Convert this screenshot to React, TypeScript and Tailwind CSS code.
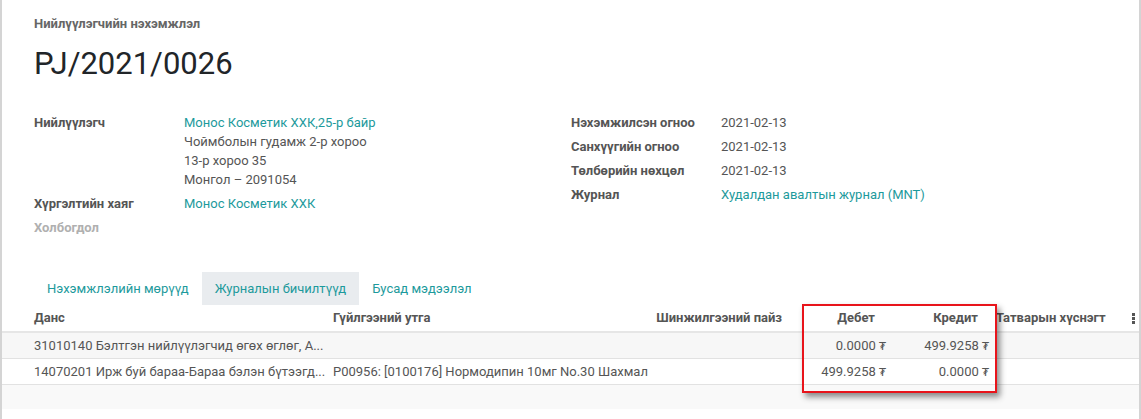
import React from "react";

const link = "text-[#1d9a9c]";

function Field({ label, children, muted }: { label: string; children?: React.ReactNode; muted?: boolean }) {
  return (
    <div className="flex mb-[5px] leading-[19px]">
      <div className={`w-[150px] shrink-0 font-bold ${muted ? "text-[#b0b0b0]" : "text-[#555]"}`}>{label}</div>
      <div className="text-[#555]">{children}</div>
    </div>
  );
}

function Kebab() {
  return (
    <div className="flex flex-col gap-[1px] items-center">
      <span className="w-[3px] h-[3px] bg-[#555]" />
      <span className="w-[3px] h-[3px] bg-[#555]" />
      <span className="w-[3px] h-[3px] bg-[#555]" />
    </div>
  );
}

const rows = [
  { account: "31010140 Бэлтгэн нийлүүлэгчид өгөх өглөг, А...", label: "", debit: "0.0000", credit: "499.9258", bg: "bg-[#f7f7f7]" },
  { account: "14070201 Ирж буй бараа-Бараа бэлэн бүтээгд...", label: "P00956: [0100176] Нормодипин 10мг No.30 Шахмал", debit: "499.9258", credit: "0.0000", bg: "bg-white" },
];

const cols = "grid grid-cols-[326px_324px_140px_104px_100px_136px_8px]";

export default function App() {
  return (
    <div className="relative w-[1141px] h-[419px] overflow-hidden bg-white border-l-2 border-r-2 border-[#d4d4d4] text-[13px] font-['Roboto',sans-serif] text-[#555]">
      <div className="pl-[32px] pt-[15px]">
        <div className="font-bold text-[#666] leading-[18px]">Нийлүүлэгчийн нэхэмжлэл</div>
        <h1 className="mt-[13px] text-[31px] leading-[36px] text-[#212529]">PJ/2021/0026</h1>

        <div className="flex mt-[31px]">
          <div className="w-[537px]">
            <Field label="Нийлүүлэгч">
              <div className={link}>Монос Косметик ХХК,25-р байр</div>
              <div>Чоймболын гудамж 2-р хороо</div>
              <div>13-р хороо 35</div>
              <div>Монгол – 2091054</div>
            </Field>
            <Field label="Хүргэлтийн хаяг">
              <span className={link}>Монос Косметик ХХК</span>
            </Field>
            <Field label="Холбогдол" muted />
          </div>
          <div>
            <Field label="Нэхэмжилсэн огноо">2021-02-13</Field>
            <Field label="Санхүүгийн огноо">2021-02-13</Field>
            <Field label="Төлбөрийн нөхцөл">2021-02-13</Field>
            <Field label="Журнал">
              <span className={link}>Худалдан авалтын журнал (MNT)</span>
            </Field>
          </div>
        </div>

        <div className="flex mt-[30px] h-[33px] items-stretch">
          <div className={`px-[13px] flex items-center ${link}`}>Нэхэмжлэлийн мөрүүд</div>
          <div className={`px-[13px] flex items-center bg-[#e9ecef] ${link}`}>Журналын бичилтүүд</div>
          <div className={`px-[13px] flex items-center ${link}`}>Бусад мэдээлэл</div>
        </div>
      </div>

      <div>
        <div className={`${cols} h-[28px] items-center font-bold text-[#555] border-b-2 border-[#e6e6e6]`}>
          <div className="pl-[32px]">Данс</div>
          <div className="pl-[5px]">Гүйлгээний утга</div>
          <div className="text-right pr-[10px]">Шинжилгээний пайз</div>
          <div className="text-right pr-[21px]">Дебет</div>
          <div className="text-right pr-[18px]">Кредит</div>
          <div className="whitespace-nowrap">Татварын хүснэгт</div>
          <div className="flex justify-start"><Kebab /></div>
        </div>
        {rows.map((r) => (
          <div key={r.account} className={`${cols} h-[26px] items-center border-b border-[#e2e2e2] ${r.bg}`}>
            <div className="pl-[32px] truncate">{r.account}</div>
            <div className="pl-[5px] whitespace-nowrap">{r.label}</div>
            <div />
            <div className="text-right pr-[10px]">{r.debit} <span className="font-['DejaVu_Sans',sans-serif] text-[11px]">₮</span></div>
            <div className="text-right pr-[7px]">{r.credit} <span className="font-['DejaVu_Sans',sans-serif] text-[11px]">₮</span></div>
            <div />
            <div />
          </div>
        ))}
        <div className="h-[24px] bg-[#f9f9f9]" />
      </div>

      <div className="absolute left-[800px] top-[304px] w-[195px] h-[89px] border-2 border-[#e8141b] shadow-[3px_4px_6px_rgba(0,0,0,0.45)]" />
    </div>
  );
}
